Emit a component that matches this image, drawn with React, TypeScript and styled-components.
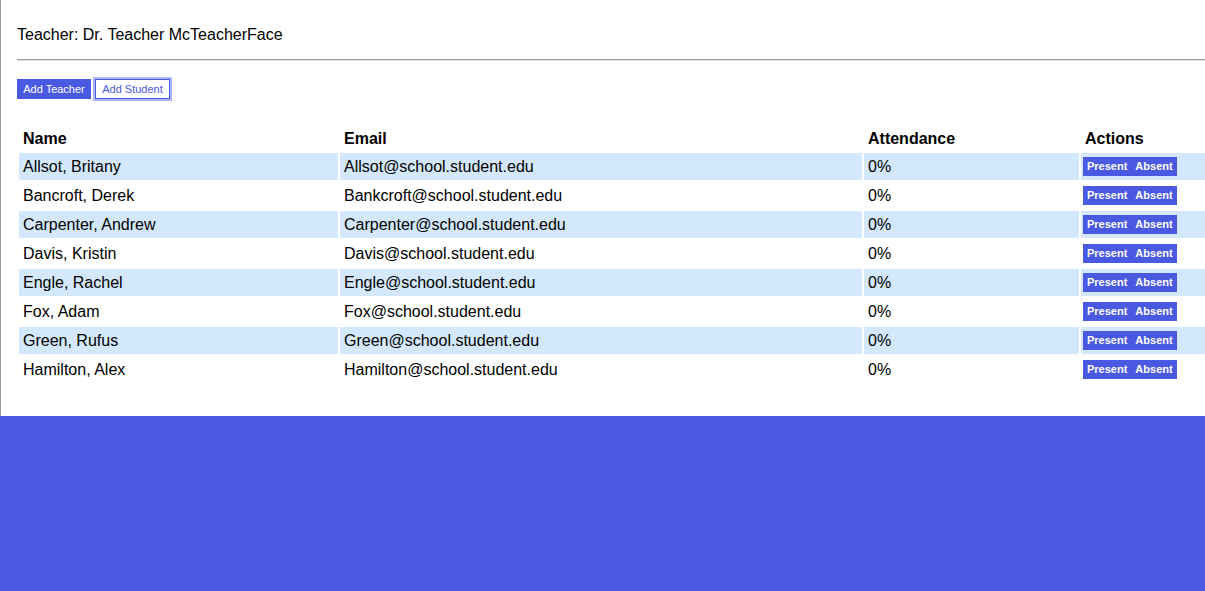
import React from 'react'
import styled, { createGlobalStyle } from 'styled-components'

const BLUE = '#4a59e2'

const GlobalStyle = createGlobalStyle`
  html, body {
    margin: 0;
    padding: 0;
    background: ${BLUE};
    overflow: hidden;
    font-family: Helvetica, "Liberation Sans", Arial, sans-serif;
  }
`

const Panel = styled.div`
  background: #fff;
  border-left: 1px solid #9a9a9a;
  padding: 26px 0 31px 16px;
  width: 1300px;
`

const TeacherLine = styled.p`
  margin: 0;
  font-size: 16px;
  line-height: 18px;
  color: #000;
`

const Divider = styled.hr`
  margin: 15px 0 18px;
  border: 0;
  border-top: 1px solid #9a9a9a;
  border-bottom: 1px solid #e2e2e2;
  height: 0;
`

const Toolbar = styled.div`
  display: flex;
  gap: 4px;
  align-items: center;
`

const ToolButton = styled.button<{ $outline?: boolean }>`
  font-family: Helvetica, "Liberation Sans", Arial, sans-serif;
  font-size: 11px;
  line-height: 14px;
  height: 20px;
  padding: 0 6px;
  min-width: ${p => (p.$outline ? '75px' : '74px')};
  border: ${p => (p.$outline ? `1px solid ${BLUE}` : '0')};
  background: ${p => (p.$outline ? '#fff' : BLUE)};
  color: ${p => (p.$outline ? BLUE : '#fff')};
  box-shadow: ${p => (p.$outline ? '0 0 0 2px #aab8fb' : 'none')};
  margin: 0;
  cursor: pointer;
`

const Table = styled.table`
  margin: 23px 0 0 0;
  border-spacing: 2px;
  table-layout: fixed;
  width: 1280px;
`

const HeadCell = styled.th<{ $w?: number }>`
  text-align: left;
  font-size: 16px;
  font-weight: bold;
  line-height: 19px;
  padding: 5px 4px 3px;
  width: ${p => (p.$w ? `${p.$w}px` : 'auto')};
`

const Row = styled.tr<{ $shaded: boolean }>`
  background: ${p => (p.$shaded ? '#d3e8fc' : '#fff')};
`

const Cell = styled.td`
  font-size: 16px;
  line-height: 19px;
  padding: 4px 4px;
  color: #000;
`

const ActionCell = styled.td`
  padding: 4px 2px;
  font-size: 16px;
  line-height: 19px;
  height: 19px;
`

const ActionButton = styled.button`
  font-family: Helvetica, "Liberation Sans", Arial, sans-serif;
  font-size: 11px;
  font-weight: 600;
  line-height: 19px;
  height: 19px;
  padding: 0 4px;
  border: 0;
  margin: 0;
  background: ${BLUE};
  color: #fff;
  vertical-align: top;
`

const students = [
  ['Allsot', 'Britany', 'Allsot'],
  ['Bancroft', 'Derek', 'Bankcroft'],
  ['Carpenter', 'Andrew', 'Carpenter'],
  ['Davis', 'Kristin', 'Davis'],
  ['Engle', 'Rachel', 'Engle'],
  ['Fox', 'Adam', 'Fox'],
  ['Green', 'Rufus', 'Green'],
  ['Hamilton', 'Alex', 'Hamilton'],
]

export default function App() {
  return (
    <>
      <GlobalStyle />
      <Panel>
        <TeacherLine>Teacher: Dr. Teacher McTeacherFace</TeacherLine>
        <Divider />
        <Toolbar>
          <ToolButton>Add Teacher</ToolButton>
          <ToolButton $outline>Add Student</ToolButton>
        </Toolbar>
        <Table>
          <thead>
            <tr>
              <HeadCell $w={311}>Name</HeadCell>
              <HeadCell $w={514}>Email</HeadCell>
              <HeadCell $w={207}>Attendance</HeadCell>
              <HeadCell>Actions</HeadCell>
            </tr>
          </thead>
          <tbody>
            {students.map(([last, first, mail], i) => (
              <Row key={last} $shaded={i % 2 === 0}>
                <Cell>
                  {last}, {first}
                </Cell>
                <Cell>{mail}@school.student.edu</Cell>
                <Cell>0%</Cell>
                <ActionCell>
                  <ActionButton>Present</ActionButton>
                  <ActionButton>Absent</ActionButton>
                </ActionCell>
              </Row>
            ))}
          </tbody>
        </Table>
      </Panel>
    </>
  )
}
